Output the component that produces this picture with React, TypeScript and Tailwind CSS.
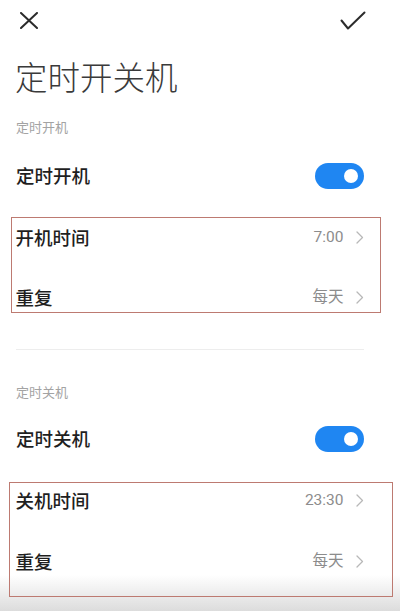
import type { ReactNode } from 'react'

const font = { fontFamily: '"Noto Sans CJK SC", "Noto Sans", Roboto, sans-serif' }

function Toggle() {
  return (
    <div className="flex h-[26px] w-[49px] items-center justify-end rounded-full bg-[#1f86f2] pr-[6px]">
      <div className="h-[14px] w-[14px] rounded-full bg-white" />
    </div>
  )
}

function Chevron() {
  return (
    <svg width="8" height="13" viewBox="0 0 8 13" fill="none" className="ml-[12px]">
      <path d="M1 1l5.5 5.5L1 12" stroke="#b8b8b8" strokeWidth="1.3" strokeLinecap="round" strokeLinejoin="round" />
    </svg>
  )
}

function ValueRow({ label, value, className = '' }: { label: string; value: string; className?: string }) {
  return (
    <div className={`flex h-[28px] items-center justify-between ${className}`}>
      <span className="text-[18.5px] font-medium text-[#1f1f1f]">{label}</span>
      <div className="flex items-center">
        <span className="font-[Roboto,'Noto_Sans_CJK_SC',sans-serif] text-[15.5px] text-[#8c8c8c]">{value}</span>
        <Chevron />
      </div>
    </div>
  )
}

function SectionLabel({ children }: { children: ReactNode }) {
  return <div className="flex h-[30px] items-center pl-[16px] text-[13px] text-[#a3a3a3]">{children}</div>
}

function SwitchRow({ label, className }: { label: string; className: string }) {
  return (
    <div className={`flex items-center justify-between pl-[16px] pr-[36px] ${className}`}>
      <span className="text-[18.5px] font-medium text-[#1f1f1f]">{label}</span>
      <Toggle />
    </div>
  )
}

export default function App() {
  return (
    <div
      className="h-[611px] w-[400px] overflow-hidden bg-[linear-gradient(to_bottom,#ffffff_0,#ffffff_575px,#dcdcdc_611px)]"
      style={font}
    >
      {/* top bar */}
      <div className="flex h-[40px] items-center justify-between pl-[20px] pr-[34px]">
        <svg width="18" height="17" viewBox="0 0 18 17" fill="none">
          <path d="M1 1l16 15M17 1L1 16" stroke="#2b2b2b" strokeWidth="2" strokeLinecap="round" />
        </svg>
        <svg width="26" height="19" viewBox="0 0 26 19" fill="none">
          <path d="M1.5 9.5l6.5 8L24.5 1.5" stroke="#2b2b2b" strokeWidth="2" strokeLinecap="round" strokeLinejoin="round" />
        </svg>
      </div>

      <div className="flex h-[72px] items-center pl-[15px] text-[32.5px] font-light text-[#3a3a3a]">定时开关机</div>

      <SectionLabel>定时开机</SectionLabel>
      <SwitchRow label="定时开机" className="h-[68px]" />

      <div className="ml-[11px] mt-[7px] w-[370px] border-[1.5px] border-[#bd7a71] pb-0 pl-[3.5px] pr-[16.5px] pt-[5.5px]">
        <ValueRow label="开机时间" value="7:00" />
        <ValueRow label="重复" value="每天" className="mt-[32px]" />
      </div>

      <div className="ml-[16px] mt-[36px] h-px w-[348px] bg-[#ededed]" />

      <div className="mt-[27px]">
        <SectionLabel>定时关机</SectionLabel>
      </div>
      <SwitchRow label="定时关机" className="h-[64px]" />

      <div className="ml-[9px] mt-[11.5px] w-[384px] border-[1.5px] border-[#bd7a71] pb-[20px] pl-[5.5px] pr-[28.5px] pt-[3.5px]">
        <ValueRow label="关机时间" value="23:30" />
        <ValueRow label="重复" value="每天" className="mt-[33px]" />
      </div>
    </div>
  )
}
